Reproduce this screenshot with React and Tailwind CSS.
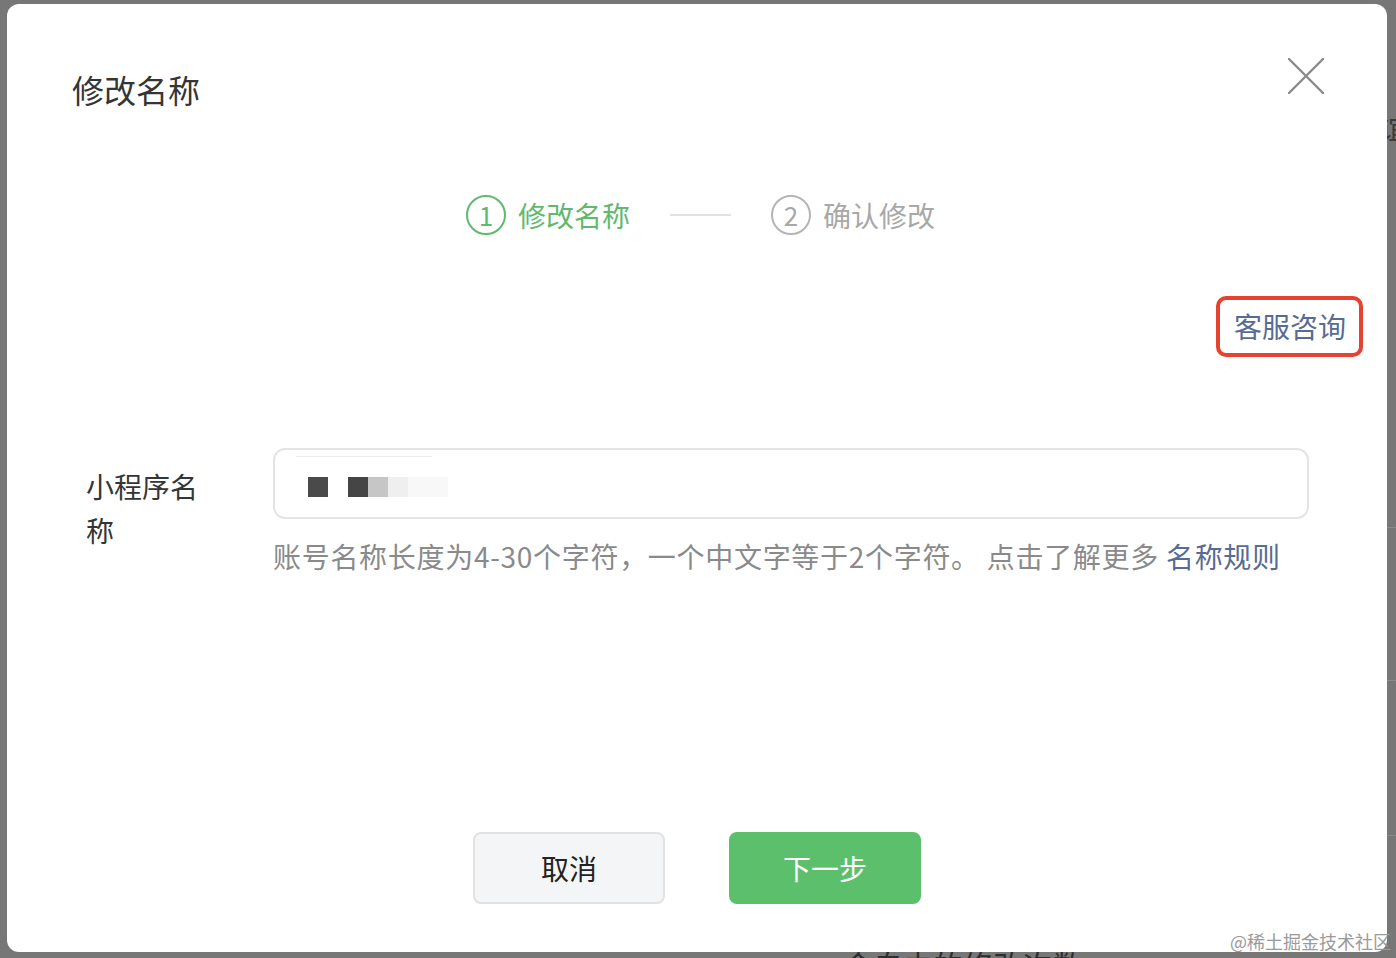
export default function App() {
  return (
    <div className="relative h-[958px] w-[1396px] overflow-hidden bg-[#777777] font-['Noto_Sans_CJK_SC',sans-serif]">
      {/* page content behind the overlay */}
      <div className="absolute left-[1380px] top-[110px] text-[28px] leading-[36px] text-[#3a3a3a]">谊</div>
      <div className="absolute left-[843px] top-[944px] text-[30px] leading-[40px] text-[#2e2e2e]">会自由的修改次数</div>
      <div className="absolute left-[1387px] top-[527px] h-[1px] w-[9px] bg-[#8a8a8a]" />
      <div className="absolute left-[1387px] top-[680px] h-[1px] w-[9px] bg-[#8a8a8a]" />
      <div className="absolute left-[1387px] top-[835px] h-[1px] w-[9px] bg-[#8a8a8a]" />

      <div className="relative flex pl-[7px] pt-[4px]">
        <div className="relative flex h-[948px] w-[1380px] flex-col rounded-[12px] bg-white">
          <svg
            className="absolute left-[1281px] top-[54px] h-[36px] w-[36px]"
            viewBox="0 0 36 36"
            fill="none"
            stroke="#8a8a8a"
            strokeWidth="2.4"
            strokeLinecap="round"
          >
            <path d="M1 1 L35 35 M35 1 L1 35" />
          </svg>

          <div className="pl-[65px] pt-[61px] text-[32px] leading-[48px] text-[#353535]">修改名称</div>

          <div className="mt-[82px] flex h-[40px] items-center justify-center pl-[7px]">
            <div className="flex h-[40px] w-[40px] items-center justify-center rounded-full border-2 border-[#5fba6d] text-[26px] leading-none text-[#5fba6d]">
              1
            </div>
            <div className="ml-[12px] text-[28px] leading-[40px] text-[#5fba6d]">修改名称</div>
            <div className="mx-[40px] h-[2px] w-[61px] bg-[#e2e2e2]" />
            <div className="flex h-[40px] w-[40px] items-center justify-center rounded-full border-2 border-[#b5b5b5] text-[26px] leading-none text-[#a8a8a8]">
              2
            </div>
            <div className="ml-[12px] text-[28px] leading-[40px] text-[#a8a8a8]">确认修改</div>
          </div>

          <div className="mt-[61px] flex justify-end pr-[24px]">
            <div className="flex h-[61px] items-center rounded-[10px] border-4 border-[#e5432f] pb-[2px] pl-[14px] pr-[13px] text-[28px] leading-[40px] text-[#576b95]">
              客服咨询
            </div>
          </div>

          <div className="mt-[91px] flex pl-[79px]">
            <div className="mr-[67px] w-[120px] pt-[16px] text-[28px] leading-[44px] text-[#353535]">小程序名称</div>
            <div className="flex w-[1036px] flex-col">
              <div className="relative flex h-[71px] items-center rounded-[12px] border-2 border-[#e4e4e4] pl-[33px] pt-[6px]">
                <div className="absolute left-[21px] top-[6px] h-[1px] w-[136px] bg-[#ededed]" />
                <div className="h-[20px] w-[20px] bg-[#4a4a4a]" />
                <div className="ml-[20px] h-[20px] w-[20px] bg-[#454545]" />
                <div className="h-[20px] w-[20px] bg-[#c6c6c6]" />
                <div className="h-[20px] w-[20px] bg-[#efefef]" />
                <div className="h-[20px] w-[40px] bg-[#f8f8f8]" />
              </div>
              <div className="mt-[17px] whitespace-nowrap text-[28px] leading-[40px] tracking-[0.7px] text-[#8a8a8a]">
                账号名称长度为4-30个字符，一个中文字等于2个字符。 点击了解更多 <span className="text-[#576b95]">名称规则</span>
              </div>
            </div>
          </div>

          <div className="mt-auto flex justify-center gap-[64px] pb-[48px]">
            <button className="flex h-[72px] w-[192px] items-center justify-center rounded-[8px] border-2 border-[#e2e2e2] bg-[#f4f5f6] text-[28px] text-[#222222]">
              取消
            </button>
            <button className="flex h-[72px] w-[192px] items-center justify-center rounded-[8px] bg-[#5bbf6c] text-[28px] text-white">
              下一步
            </button>
          </div>
        </div>
      </div>

      <div className="absolute left-[1230px] top-[929px] whitespace-nowrap text-[18px] leading-[24px] text-[#9a9a9a]">
        @稀土掘金技术社区
      </div>
    </div>
  );
}
